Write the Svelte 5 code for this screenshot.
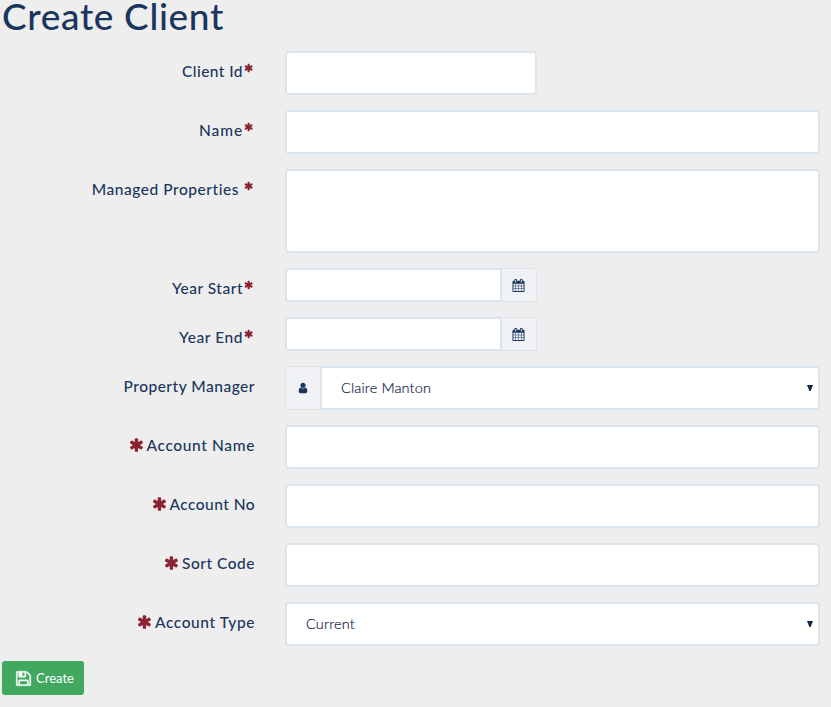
<script>
  const asterisk = 'M1482 1050l-266-154 266-154q46-26 59.5-77.5t-12.5-97.5l-64-110q-26-46-77.5-59.5t-97.5 12.5l-266 153v-307q0-52-38-90t-90-38h-128q-52 0-90 38t-38 90v307l-266-153q-46-26-97.5-12.5t-77.5 59.5l-64 110q-26 46-12.5 97.5t59.5 77.5l266 154-266 154q-46 26-59.5 77.5t12.5 97.5l64 110q26 46 77.5 59.5t97.5-12.5l266-153v307q0 52 38 90t90 38h128q52 0 90-38t38-90v-307l266 153q46 26 97.5 12.5t77.5-59.5l64-110q26-46 12.5-97.5t-59.5-77.5z';
  const calendar = 'M192 1664h288v-288h-288v288zm352 0h320v-288h-320v288zm-352-352h288v-320h-288v320zm352 0h320v-320h-320v320zm-352-384h288v-288h-288v288zm736 736h320v-288h-320v288zm-384-736h320v-288h-320v288zm768 736h288v-288h-288v288zm-384-352h320v-320h-320v320zm-352-864v-288q0-13-9.5-22.5t-22.5-9.5h-64q-13 0-22.5 9.5t-9.5 22.5v288q0 13 9.5 22.5t22.5 9.5h64q13 0 22.5-9.5t9.5-22.5zm736 864h288v-320h-288v320zm-384-384h320v-288h-320v288zm384 0h288v-288h-288v288zm32-480v-288q0-13-9.5-22.5t-22.5-9.5h-64q-13 0-22.5 9.5t-9.5 22.5v288q0 13 9.5 22.5t22.5 9.5h64q13 0 22.5-9.5t9.5-22.5zm384-64v1280q0 52-38 90t-90 38h-1408q-52 0-90-38t-38-90v-1280q0-52 38-90t90-38h128v-96q0-66 47-113t113-47h64q66 0 113 47t47 113v96h384v-96q0-66 47-113t113-47h64q66 0 113 47t47 113v96h128q52 0 90 38t38 90z';
  const user = 'M1536 1399q0 109-62.5 187t-150.5 78h-854q-88 0-150.5-78t-62.5-187q0-85 8.5-160.5t31.5-152 58.5-131 94-89 134.5-34.5q131 128 313 128t313-128q76 0 134.5 34.5t94 89 58.5 131 31.5 152 8.5 160.5zm-256-887q0 159-112.5 271.5t-271.5 112.5-271.5-112.5-112.5-271.5 112.5-271.5 271.5-112.5 271.5 112.5 112.5 271.5z';
  const floppy = 'M512 1536h768v-384h-768v384zm896 0h128v-896q0-14-10-38.5t-20-34.5l-281-281q-10-10-34-20t-39-10v416q0 40-28 68t-68 28h-576q-40 0-68-28t-28-68v-416h-128v1280h128v-416q0-40 28-68t68-28h832q40 0 68 28t28 68v416zm-384-928v-320q0-13-9.5-22.5t-22.5-9.5h-192q-13 0-22.5 9.5t-9.5 22.5v320q0 13 9.5 22.5t22.5 9.5h192q13 0 22.5-9.5t9.5-22.5zm640 32v928q0 40-28 68t-68 28h-1344q-40 0-68-28t-28-68v-1344q0-40 28-68t68-28h928q40 0 88 20t76 48l280 280q28 28 48 76t20 88z';

  const fields = [
    { label: 'Client Id', width: 61, mark: 'after', kind: 'short' },
    { label: 'Name', width: 44, mark: 'after', kind: 'text' },
    { label: 'Managed Properties', width: 147.5, mark: 'spaced', kind: 'area' },
    { label: 'Year Start', width: 71, mark: 'after', kind: 'date' },
    { label: 'Year End', width: 64, mark: 'after', kind: 'date' },
    { label: 'Property Manager', width: 131.5, kind: 'select', value: 'Claire Manton', valueWidth: 90, icon: true },
    { label: 'Account Name', width: 108.5, mark: 'before', kind: 'text' },
    { label: 'Account No', width: 85.5, mark: 'before', kind: 'text' },
    { label: 'Sort Code', width: 73, mark: 'before', kind: 'text' },
    { label: 'Account Type', width: 100, mark: 'before', kind: 'select', value: 'Current', valueWidth: 49 }
  ];

  // Tracks the letters out so the text spans the given width.
  function track(node, width) {
    const gap = (width - node.getBoundingClientRect().width) / node.textContent.length;
    node.style.letterSpacing = `${gap}px`;
  }
</script>

{#snippet glyph(d, cls)}
  <svg class={cls} viewBox="0 0 1792 1792" aria-hidden="true"><path {d} /></svg>
{/snippet}

<main>
  <h1><span use:track={222}>Create Client</span></h1>
  <form>
    {#each fields as f, i}
      <div class="row">
        <label for="field-{i}" class:trailing={f.mark === 'after' || f.mark === 'spaced'} class:spaced={f.mark === 'spaced'}>
          {#if f.mark === 'before'}{@render glyph(asterisk, 'star')}{/if}
          <span use:track={f.width}>{f.label}</span>
          {#if f.mark === 'after' || f.mark === 'spaced'}{@render glyph(asterisk, 'star small')}{/if}
        </label>
        {#if f.kind === 'area'}
          <textarea id="field-{i}" class="box area"></textarea>
        {:else if f.kind === 'date'}
          <div class="group date">
            <input id="field-{i}" class="box" />
            <span class="addon">{@render glyph(calendar, 'cal')}</span>
          </div>
        {:else if f.kind === 'select'}
          <div class="group">
            {#if f.icon}<span class="addon lead">{@render glyph(user, 'user')}</span>{/if}
            <div id="field-{i}" class="box select" class:joined={f.icon} role="combobox" aria-expanded="false" aria-controls="field-{i}" tabindex="0">
              <span class="value" use:track={f.valueWidth}>{f.value}</span>
              <svg class="arrow" viewBox="0 0 6 6" aria-hidden="true"><path d="M0 0h6L3.600 6h-1.200z" /></svg>
            </div>
          </div>
        {:else}
          <input id="field-{i}" class="box" class:short={f.kind === 'short'} />
        {/if}
      </div>
    {/each}
    <button type="button">{@render glyph(floppy, 'save')}<span use:track={38}>Create</span></button>
  </form>
</main>

<style>
  :global(body) {
    margin: 0;
    background: #eeeeee;
  }
  main {
    box-sizing: border-box;
    height: 707px;
    color: #1b365d;
    background: #eeeeee;
    font-family: Lato, 'Liberation Sans', sans-serif;
  }
  h1 {
    margin: 0;
    padding-left: 2px;
    height: 51px;
    font-size: 37px;
    font-weight: 500;
    line-height: 32px;
    box-sizing: border-box;
    white-space: nowrap;
  }
  form {
    display: flex;
    flex-direction: column;
    gap: 15px;
  }
  .row {
    display: flex;
    align-items: flex-start;
    padding-right: 11px;
  }
  label {
    flex: 0 0 255px;
    box-sizing: border-box;
    margin-right: 30px;
    padding-top: 10px;
    display: flex;
    justify-content: flex-end;
    align-items: center;
    font-size: 15.5px;
    font-weight: 500;
    line-height: 20px;
    white-space: nowrap;
  }
  .trailing {
    padding-right: 1px;
  }
  svg {
    display: block;
    flex: none;
    fill: currentColor;
  }
  .star {
    width: 16px;
    height: 16px;
    margin-right: 2px;
    color: #8a2432;
  }
  .small {
    width: 10px;
    height: 10px;
    margin: -7px 0 0 1px;
  }
  .spaced .small {
    margin-left: 5px;
  }
  .box {
    display: block;
    flex: 1;
    min-width: 0;
    height: 44px;
    box-sizing: border-box;
    margin: 0;
    border: 2px solid #dce4ec;
    border-radius: 4px;
    background: #fff;
    color: inherit;
    outline: none;
    resize: none;
  }
  .short {
    flex: 0 0 252px;
  }
  .area {
    height: 84px;
  }
  .group {
    display: flex;
    flex: 1;
    min-width: 0;
  }
  .date {
    flex: 0 0 252px;
  }
  .date .box {
    height: 34px;
    border-radius: 4px 0 0 4px;
  }
  .addon {
    box-sizing: border-box;
    display: flex;
    align-items: center;
    justify-content: center;
    width: 35px;
    padding-right: 1px;
    border: 1px solid #dce4ec;
    border-left: 0;
    border-radius: 0 3px 3px 0;
    background: #f0f2f5;
  }
  .lead {
    border-left: 1px solid #dce4ec;
    border-right: 0;
    border-radius: 3px 0 0 3px;
  }
  .cal {
    width: 13px;
    height: 13px;
  }
  .user {
    width: 12px;
    height: 12px;
  }
  .select {
    display: flex;
    align-items: center;
    justify-content: space-between;
    padding: 0 5px 0 19px;
    color: #14294a;
    font-size: 14.5px;
    font-weight: 300;
    line-height: 20px;
    white-space: nowrap;
  }
  .value {
    -webkit-text-stroke: 0.2px currentColor;
  }
  .joined {
    border-radius: 0 4px 4px 0;
  }
  .arrow {
    width: 6px;
    height: 6px;
  }
  button {
    display: flex;
    align-items: center;
    width: 82px;
    height: 34px;
    margin: 0 0 0 2px;
    padding: 0 0 0 13px;
    border: 0;
    border-radius: 3px;
    background: #42a85f;
    color: #fff;
    font: 400 13px/20px Lato, 'Liberation Sans', sans-serif;
  }
  .save {
    width: 17px;
    height: 17px;
    margin-right: 4px;
    stroke: currentColor;
    stroke-width: 40;
  }
</style>
